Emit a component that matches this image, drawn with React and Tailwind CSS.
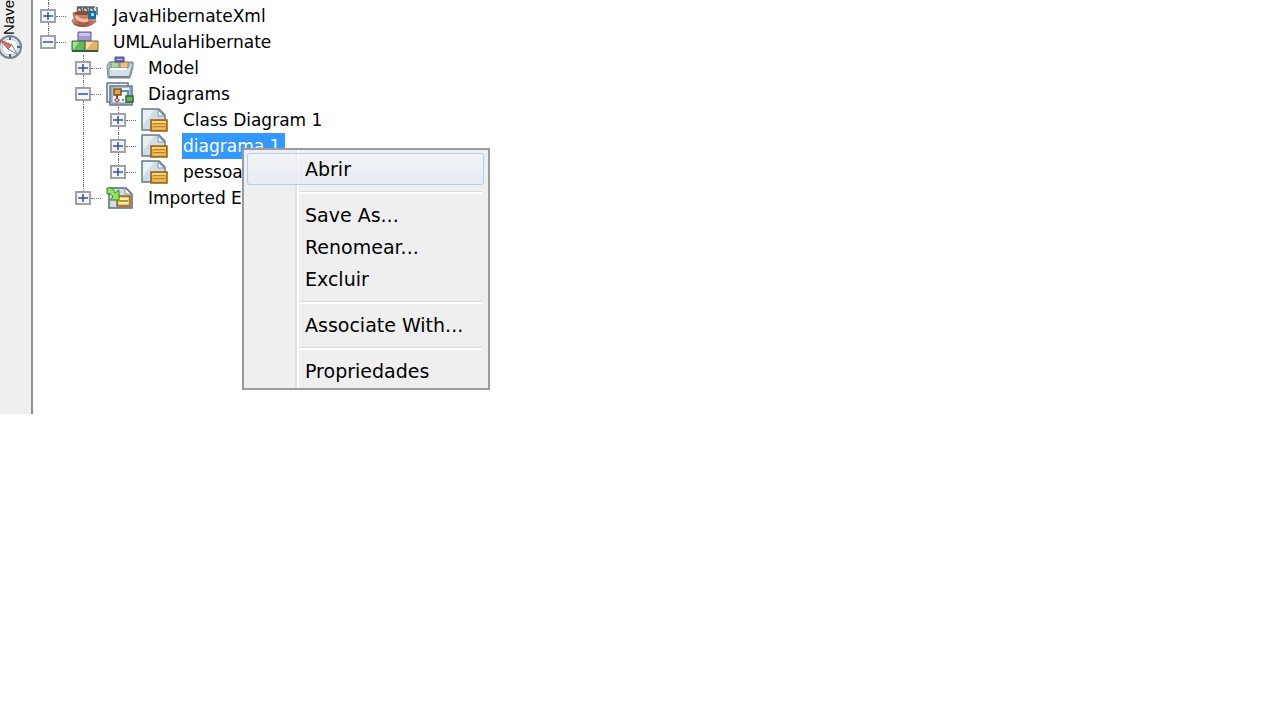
import React from "react";
import clsx from "clsx";

const CoffeeIcon = () => (
  <svg viewBox="0 0 28 24" className="h-6 w-7">
    <ellipse cx="12" cy="19" rx="10" ry="4" fill="#9c4f3b" />
    <ellipse cx="13" cy="17" rx="12" ry="4" fill="#e3a18b" stroke="#a85d48" />
    <path d="M2 9h21c0 7-3 10-10 10S3 16 2 9Z" fill="#cf7b62" stroke="#a85d48" />
    <path d="M5 12c2 4 7 5 12 4" fill="none" stroke="#f2bfac" strokeWidth="3" />
    <path d="M3 17c5 4 14 4 20 0" fill="none" stroke="#8b4636" />
    <ellipse cx="12" cy="9" rx="9" ry="2" fill="#8a4a3a" />
    <path d="M6 3h19v4H6z" fill="#d9dadb" />
    <path
      d="M8 8c-4-3 0-6 2-3s-1 4-2 2M14 8c-4-3 0-6 2-3s-1 4-2 2M20 8c-4-3 0-6 2-3s-1 4-2 2M6 3h18M26 3v8"
      fill="none"
      stroke="#5b5d60"
      strokeWidth="1.5"
    />
    <path d="M17 7h8v8h-8z" fill="#176fa8" />
    <path d="M20 9h3v3h-3z" fill="#a7dcf7" />
  </svg>
);

const UmlIcon = () => (
  <svg viewBox="0 0 28 24" className="h-6 w-7">
    <path d="M7 2h13v9H7z" fill="#a19bd2" stroke="#625b99" />
    <path d="M8 3h11v3H8z" fill="#cbc7ec" />
    <path d="M1 11h13v10H1z" fill="#5fbb58" stroke="#34743a" />
    <path d="M2 12h6l-6 8z" fill="#a9e09f" />
    <path d="M14 11h13v10H14z" fill="#e0b56b" stroke="#80613a" />
    <path d="M15 12h7l-7 8z" fill="#f5dba8" />
    <path d="M1 21h26" stroke="#3d5941" strokeWidth="2" />
  </svg>
);

const ModelIcon = () => (
  <svg viewBox="0 0 28 24" className="h-6 w-7">
    <path d="M3 6h24v5l-3 11H2L1 10Z" fill="#b4c0cb" stroke="#7c8896" />
    <path d="M5 6h8v9H5z" fill="#a4d794" stroke="#5c9659" />
    <path d="M14 6h8v9h-8z" fill="#f0bd8c" stroke="#b28252" />
    <path d="M9 1h9v5H9z" fill="#746cb9" stroke="#4f488d" />
    <path d="M11 3h5v1h-5z" fill="#c2bdf0" />
    <path d="M3 12h19l2-5h3l-4 14H3z" fill="#d3e0ea" stroke="#8090a1" />
    <path d="M4 13h17" stroke="#fff" strokeWidth="2" />
    <path d="M3 21h20" stroke="#75808b" strokeWidth="2" />
  </svg>
);

const DiagramsIcon = () => (
  <svg viewBox="0 0 28 24" className="h-6 w-7">
    <path d="M1 1h21v19H1z" fill="#e8f0f6" stroke="#66788a" strokeWidth="1.5" />
    <path d="M4 4h22v19H4z" fill="#b9c9d7" stroke="#66788a" strokeWidth="1.5" />
    <path d="M6 5h18v16H6z" fill="#f3f8fc" stroke="#75889a" />
    <path d="M15 9h7v6" fill="none" stroke="#4b94c6" strokeWidth="2" />
    <path d="M11 13v4" stroke="#7d501c" strokeWidth="2" />
    <path d="M8 7h7v6H8z" fill="#e2a745" stroke="#7d501c" strokeWidth="1.5" />
    <path d="m11 15 3 3-3 3-3-3z" fill="#bb4550" />
    <path d="M10 17h2v2h-2z" fill="#f1cdd0" />
    <path d="M16 17h2v2h-2z" fill="#58a0c9" />
    <path d="M20 14h7v6h-7z" fill="#6bb35c" stroke="#2c662e" strokeWidth="1.5" />
  </svg>
);

const DiagramIcon = () => (
  <svg viewBox="0 0 28 24" className="h-6 w-7">
    <path d="M1 1h17l6 6v15H1z" fill="#d0dce6" stroke="#67798a" strokeWidth="1.5" />
    <path d="M2 2h11L2 17z" fill="#e9f0f5" />
    <path d="M17 2v6h6z" fill="#f8fbfe" stroke="#8494a4" />
    <path d="M10 12h16v11H10z" fill="#e9aa3f" stroke="#955c13" strokeWidth="1.5" />
    <path d="M11 13h14v2H11z" fill="#ffd477" />
    <path d="M12 16h12M12 19h12" stroke="#9b5d13" />
    <path d="M12 17h12M12 20h12" stroke="#ffda82" />
  </svg>
);

const ImportedIcon = () => (
  <svg viewBox="0 0 28 24" className="h-6 w-7">
    <path d="M3 2h17l6 6v14H3z" fill="#d0dce6" stroke="#5b6b78" strokeWidth="1.5" />
    <path d="M19 2v6h6z" fill="#f8fbfe" stroke="#8494a4" />
    <path d="M11 10h13v10H11z" fill="#f0c05d" stroke="#966119" strokeWidth="1.5" />
    <path d="M13 13h9M13 17h9" stroke="#fff1b7" strokeWidth="2" />
    <path d="M13 15h9" stroke="#966119" />
    <path d="M1 2c4-1 7 1 8 5l4-3v10H4l3-3C5 8 4 7 1 8Z" fill="#8ee557" stroke="#2c8924" />
  </svg>
);

const CompassIcon = () => (
  <svg viewBox="0 0 24 24" className="h-6 w-6 shrink-0">
    <circle cx="10" cy="12" r="11" fill="#dfe6ec" stroke="#71869a" strokeWidth="2" />
    <circle cx="10" cy="12" r="8" fill="#fff" stroke="#bdcad5" />
    <path d="M10 2v3M10 19v3M17 12h3" stroke="#52687b" strokeWidth="2" />
    <path d="m0 5 12 5-4 4z" fill="#e0706a" stroke="#b8524e" />
    <path d="m12 10 5 9-9-5z" fill="#f5f8fa" stroke="#7c8995" />
  </svg>
);

const rows = [
  { label: "JavaHibernateXml", level: 0, icon: CoffeeIcon },
  { label: "UMLAulaHibernate", level: 0, icon: UmlIcon, open: true, last: true },
  { label: "Model", level: 1, icon: ModelIcon },
  { label: "Diagrams", level: 1, icon: DiagramsIcon, open: true },
  { label: "Class Diagram 1", level: 2, icon: DiagramIcon },
  { label: "diagrama 1", level: 2, icon: DiagramIcon, selected: true },
  { label: "pessoa", level: 2, icon: DiagramIcon, last: true },
  { label: "Imported Elements", level: 1, icon: ImportedIcon, last: true },
];

const menuGroups = [
  ["Abrir"],
  ["Save As...", "Renomear...", "Excluir"],
  ["Associate With..."],
  ["Propriedades"],
];

const TreeRow = ({ label, level, icon: Icon, open, last, selected }) => (
  <li
    role="treeitem"
    aria-level={level + 1}
    aria-expanded={!!open}
    aria-selected={!!selected}
    className="flex h-[26px] items-center"
  >
    {level > 0 && <span className="w-[35px]" />}
    {level > 1 && (
      <span className="flex w-[35px] self-stretch pl-2">
        <span className="border-l border-dotted border-gray-500" />
      </span>
    )}
    <span className="flex w-4 flex-col items-center self-stretch">
      <span className="flex-1 border-l border-dotted border-gray-500" />
      <button
        type="button"
        aria-label={`${open ? "Collapse" : "Expand"} ${label}`}
        className="flex h-[14px] w-4 items-center justify-center border-2 border-[#a2a2a2] bg-[#f4f5f8]"
      >
        <svg viewBox="0 0 10 10" className="h-[10px] w-[10px] shrink-0">
          <path d={open ? "M0 5h10" : "M0 5h10M5 1v8"} stroke="#3450a0" strokeWidth="1.5" />
        </svg>
      </button>
      <span
        className={clsx(
          "flex-1 border-l border-dotted",
          last ? "border-transparent" : "border-gray-500"
        )}
      />
    </span>
    <span className="mr-[5px] w-[10px] border-t border-dotted border-gray-500" />
    <Icon />
    <span
      className={clsx(
        "ml-[13px] h-[26px] pr-[5px] pl-px leading-[27px] whitespace-nowrap",
        selected && "bg-[#3399ff] text-white"
      )}
    >
      {label}
    </span>
  </li>
);

const ContextMenu = () => (
  <div
    role="menu"
    className="absolute top-[148px] left-[242px] w-[248px] border-2 border-[#9b9b9b] bg-[#efefef] bg-[linear-gradient(to_right,transparent_51px,#e2e2e2_51px,#e2e2e2_53px,#fff_53px,#fff_55px,transparent_55px)] pt-[3px] pr-1 pb-px pl-[3px] text-[19px]"
  >
    {menuGroups.map((group, i) => (
      <div key={group[0]}>
        {i > 0 && (
          <div className="pt-[6px] pr-[2px] pb-[5px] pl-[52px]">
            <div role="separator" className="h-[3px] border-t border-[#dcdcdc] bg-white" />
          </div>
        )}
        {group.map((item) => (
          <button
            key={item}
            type="button"
            role="menuitem"
            className={clsx(
              "block h-8 w-full rounded-[3px] border pl-[57px] text-left leading-[30px]",
              item === "Abrir"
                ? "border-[#aecff7] bg-linear-to-b from-[#f3f5f8]/80 to-[#e5ebf2]/80"
                : "border-transparent"
            )}
          >
            {item}
          </button>
        ))}
      </div>
    ))}
  </div>
);

const App = () => {
  return (
    <div className="relative min-h-screen overflow-hidden bg-white font-['DejaVu_Sans',sans-serif] text-[17px] text-black">
      <div className="flex items-start">
        <aside className="flex h-[414px] w-[33px] shrink-0 flex-col border-r-2 border-[#919191] bg-[#efefef]">
          <button type="button" className="flex flex-col items-start">
            <span className="flex h-[35px] w-[18px] rotate-180 font-['Liberation_Sans',sans-serif] text-[15px] leading-[18px] [writing-mode:vertical-rl]">
              Nave
            </span>
            <CompassIcon />
          </button>
        </aside>
        <div className="pl-[7px]">
          <div className="ml-2 h-[3px] border-l border-dotted border-gray-500" />
          <ul role="tree">
            {rows.map((row) => (
              <TreeRow key={row.label} {...row} />
            ))}
          </ul>
        </div>
      </div>
      <ContextMenu />
    </div>
  );
};

export default App;
